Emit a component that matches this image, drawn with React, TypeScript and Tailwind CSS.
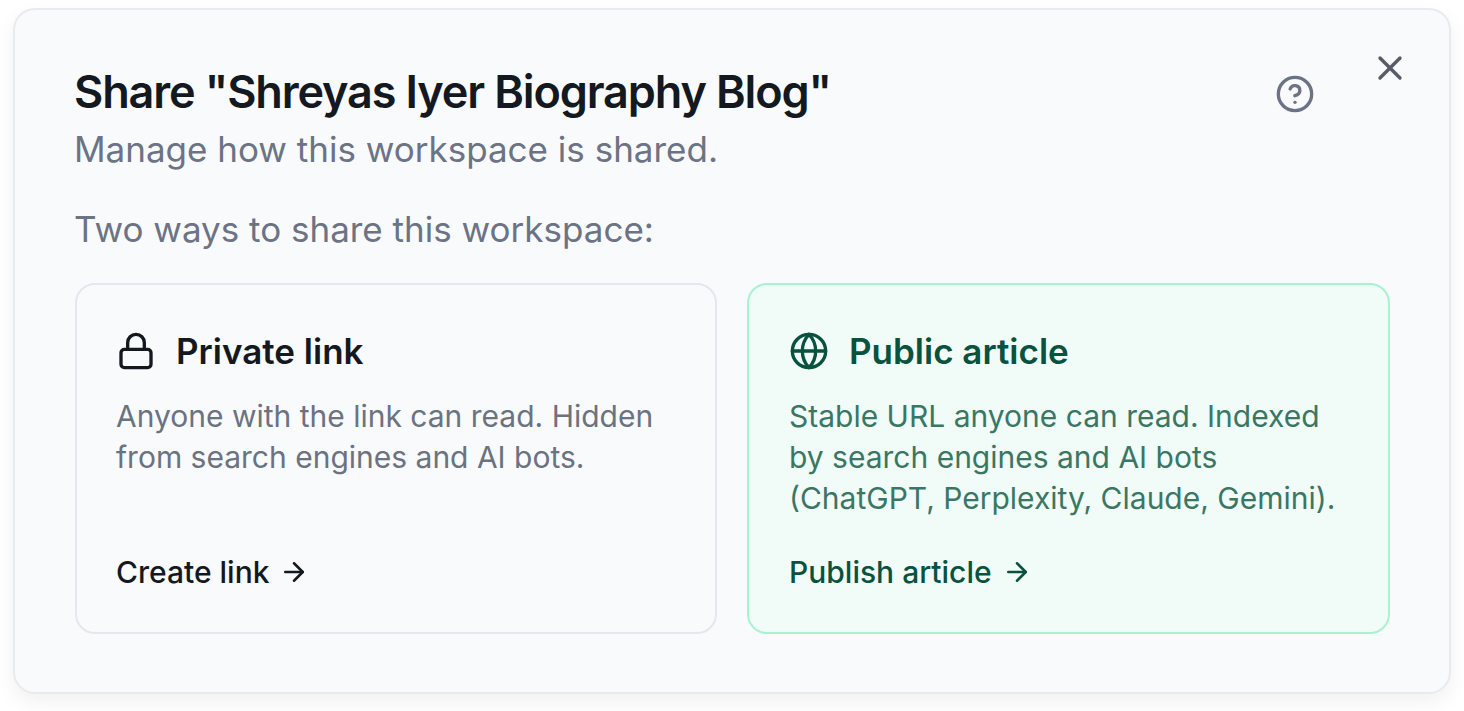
import { ArrowRight, CircleHelp, Globe, Lock, X } from "lucide-react";

const font = { fontFamily: "Inter, sans-serif" };

function ShareCard({
  icon,
  title,
  description,
  action,
  variant,
}: {
  icon: React.ReactNode;
  title: string;
  description: string[];
  action: string;
  variant: "neutral" | "green";
}) {
  const green = variant === "green";
  return (
    <div
      className={
        green
          ? "h-[351px] rounded-[20px] border-2 border-[#a7f3d0] bg-[#f1fbf8] pl-[40px] pt-[46px]"
          : "h-[351px] rounded-[20px] border-2 border-[#e5e7eb] bg-[#f9fafc] pl-[39px] pt-[46px]"
      }
    >
      <div className={green ? "flex h-[40px] items-center gap-[20px] text-[#08523e]" : "flex h-[40px] items-center gap-[20px] text-[#14181f]"}>
        {icon}
        <h3 className="text-[35px] leading-[40px] font-semibold">{title}</h3>
      </div>
      <p className={green ? "mt-[25px] h-[123px] text-[30px] leading-[41px] text-[#3a7763]" : "mt-[25px] h-[123px] text-[30px] leading-[41px] text-[#6b7280]"}>
        {description.map((line) => (
          <span key={line} className="block whitespace-nowrap">
            {line}
          </span>
        ))}
      </p>
      <div className={green ? "mt-[33px] flex items-center gap-[10px] text-[#08523e]" : "mt-[33px] flex items-center gap-[10px] text-[#14181f]"}>
        <span className="text-[30px] leading-[40px] font-medium">{action}</span>
        <ArrowRight size={30} strokeWidth={2} />
      </div>
    </div>
  );
}

export default function App() {
  return (
    <div className="h-[711px] w-full bg-white px-[13px] pt-[8px] antialiased" style={font}>
      <div className="relative h-[686px] w-[1438px] rounded-[22px] border-2 border-[#e8eaee] bg-[#f9fafc] pr-[59px] pl-[60px] pt-[52px] shadow-[0_8px_20px_rgba(0,0,0,0.06)]">
        <button className="absolute top-[38px] right-[39px] text-[#565b66]">
          <X size={40} strokeWidth={2} />
        </button>
        <div className="flex items-start justify-between pr-[75px]">
          <div>
            <h2 className="-ml-px text-[45px] leading-[60px] font-semibold tracking-[-1.125px] text-[#14181f]">
              Share "Shreyas Iyer Biography Blog"
            </h2>
            <p className="mt-[3px] -ml-px text-[35px] leading-[48px] text-[#6b7385]">Manage how this workspace is shared.</p>
          </div>
          <CircleHelp size={40} strokeWidth={2} className="mt-[12px] text-[#6b7385]" />
        </div>
        <p className="mt-[32px] -ml-px text-[35px] leading-[48px] text-[#6b7385]">Two ways to share this workspace:</p>
        <div className="mt-[30px] grid grid-cols-[642px_643px] gap-[30px]">
          <ShareCard
            variant="neutral"
            icon={<Lock size={40} strokeWidth={2} />}
            title="Private link"
            description={["Anyone with the link can read. Hidden", "from search engines and AI bots."]}
            action="Create link"
          />
          <ShareCard
            variant="green"
            icon={<Globe size={40} strokeWidth={2} />}
            title="Public article"
            description={[
              "Stable URL anyone can read. Indexed",
              "by search engines and AI bots",
              "(ChatGPT, Perplexity, Claude, Gemini).",
            ]}
            action="Publish article"
          />
        </div>
      </div>
    </div>
  );
}
